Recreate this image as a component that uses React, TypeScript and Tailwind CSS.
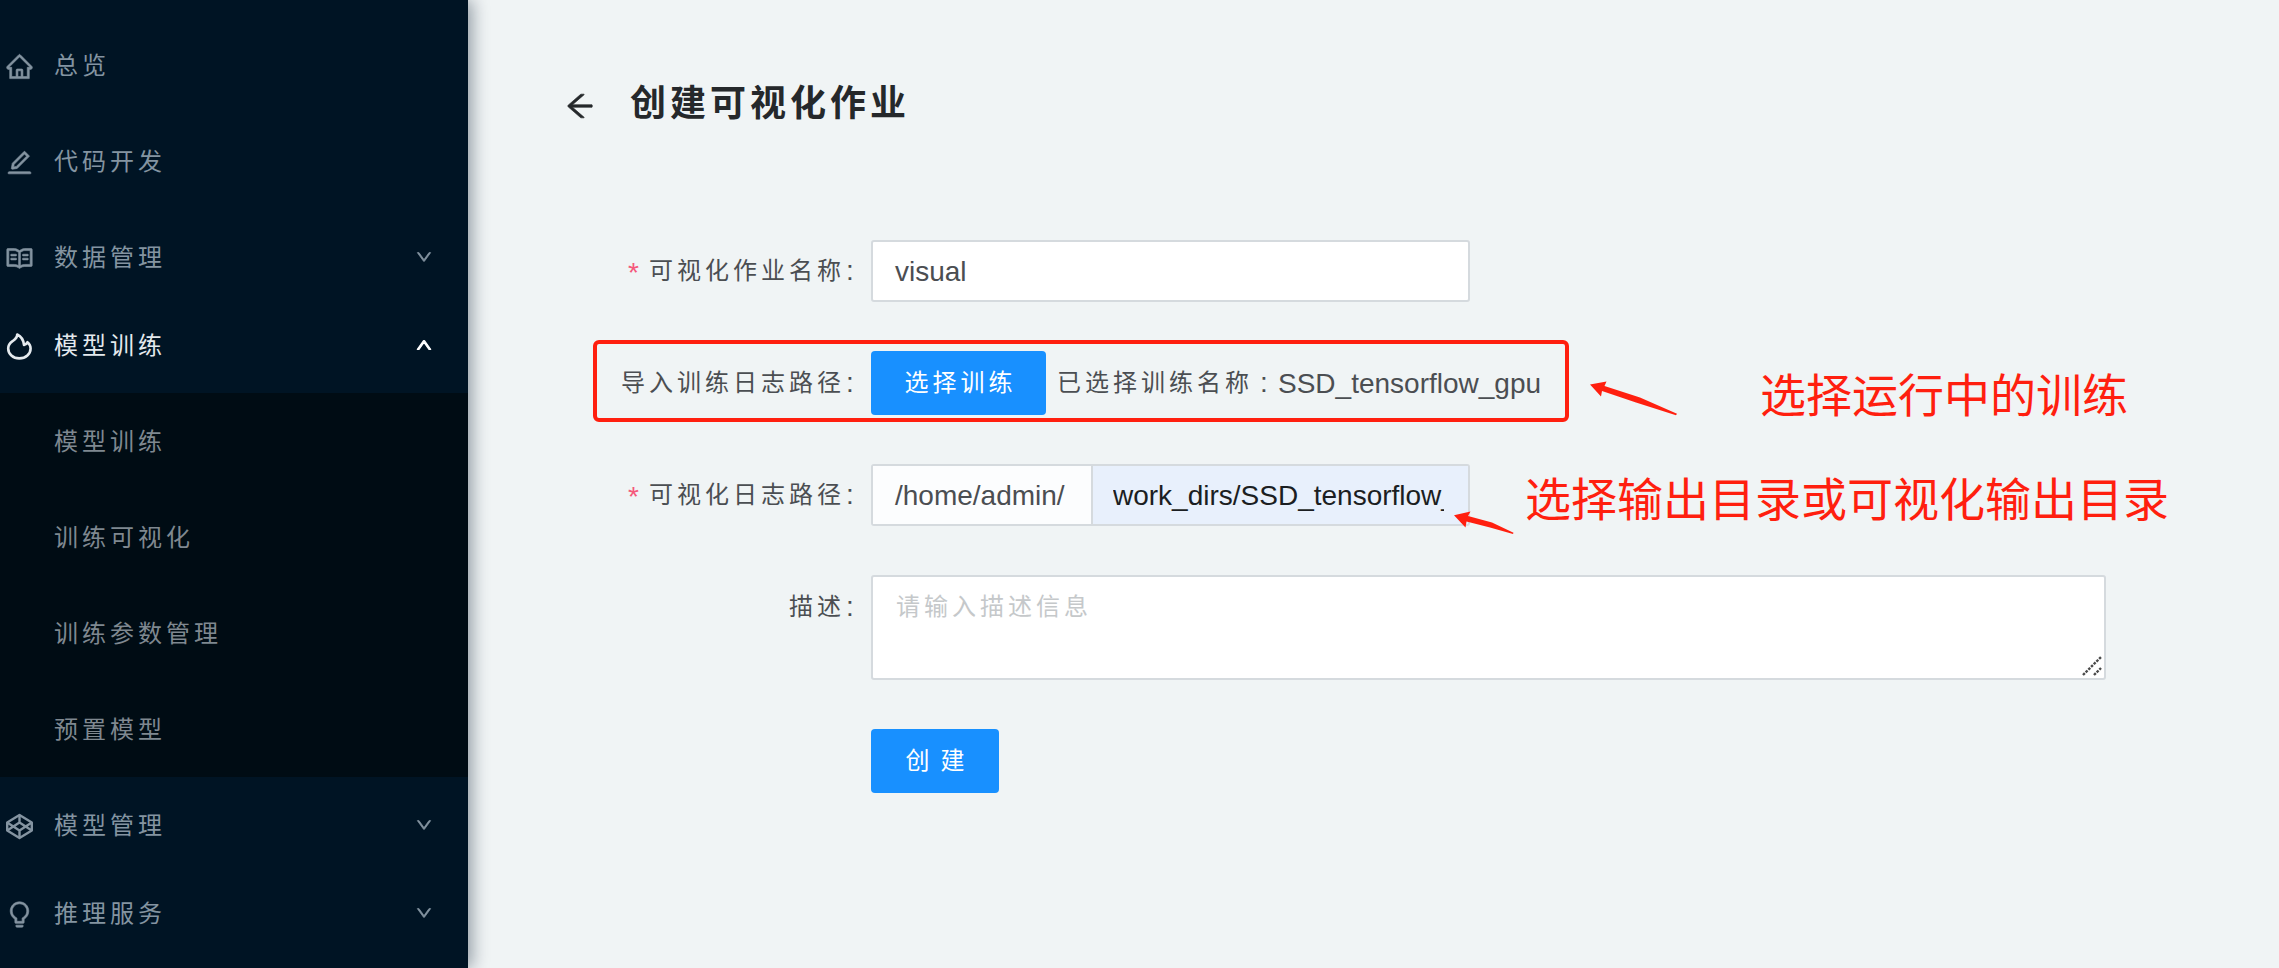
import React from 'react';
import {
  AiOutlineHome,
  AiOutlineEdit,
  AiOutlineRead,
  AiOutlineBulb,
  AiOutlineArrowLeft,
  AiOutlineDown,
  AiOutlineUp,
} from 'react-icons/ai';

const cjk = 'text-[24px] tracking-[4px] leading-8 whitespace-nowrap';

function FlameIcon() {
  return (
    <svg width="29" height="29" viewBox="0 0 29 29" fill="none" stroke="currentColor" strokeWidth="2.6" strokeLinejoin="round">
      <path d="M12.2 2.5C12.4 6 10 7.4 7.2 9.4C4.6 11.3 3.2 13.6 3.2 16.5C3.2 22 8 26.4 14.3 26.4C20.8 26.4 25.6 22 25.6 16.6C25.6 14 24.6 12 22.4 10.2C21.6 12 20.6 12.6 19 13C18.6 8.6 16.6 4.6 12.2 2.5Z" />
    </svg>
  );
}

function ModelIcon() {
  return (
    <svg width="29" height="29" viewBox="0 0 29 29" fill="none" stroke="currentColor" strokeWidth="2.4" strokeLinejoin="round">
      <path d="M14.5 3L26.8 10.6V18.4L14.5 26L2.2 18.4V10.6Z" />
      <path d="M14.5 3V10.6M14.5 18.4V26M2.2 10.6L14.5 18.4L26.8 10.6M2.2 18.4L14.5 10.6L26.8 18.4" />
    </svg>
  );
}

type RowProps = {
  icon: React.ReactNode;
  label: string;
  className: string;
  arrow?: 'up' | 'down';
};

function MenuRow({ icon, label, className, arrow }: RowProps) {
  return (
    <div className={`flex items-center pl-[5px] pr-[35px] shrink-0 ${className}`}>
      <span className="w-[49px] text-[29px] pt-[2px] [&_svg]:overflow-visible">{icon}</span>
      <span className={`flex-1 pt-px ${cjk}`}>{label}</span>
      {arrow === 'down' && <AiOutlineDown className="text-[18px]" stroke="currentColor" strokeWidth="40" />}
      {arrow === 'up' && <AiOutlineUp className="text-[18px] text-white" stroke="currentColor" strokeWidth="70" />}
    </div>
  );
}

function SubRow({ label }: { label: string }) {
  return (
    <div className={`h-24 flex items-center pl-[54px] pt-px text-[#7f8890] ${cjk}`}>{label}</div>
  );
}

function Label({ text, required }: { text: string; required?: boolean }) {
  return (
    <div className={`w-[293px] h-16 flex items-center justify-end text-[#4b4e52] ${cjk}`}>
      {required && <span className="text-[#f5587b] text-[28px] tracking-normal mr-[10px] pt-1">*</span>}
      {text}
      <span className="w-[26px] pl-px text-[28px] tracking-normal">:</span>
    </div>
  );
}

export default function App() {
  return (
    <div className="relative flex w-[2279px] h-[968px] overflow-hidden bg-[#f0f4f5] font-['Liberation_Sans','Noto_Sans_CJK_SC',sans-serif]">
      <aside className="relative z-10 w-[468px] shrink-0 h-full bg-[#001424] text-[#8494a1] pt-[17px] flex flex-col shadow-[4px_0_16px_rgba(0,21,41,0.4)]">
        <MenuRow icon={<AiOutlineHome stroke="currentColor" strokeWidth="22" />} label="总览" className="h-24" />
        <MenuRow icon={<AiOutlineEdit stroke="currentColor" strokeWidth="22" />} label="代码开发" className="h-24" />
        <MenuRow icon={<AiOutlineRead stroke="currentColor" strokeWidth="22" />} label="数据管理" className="h-[88px] pt-2" arrow="down" />
        <MenuRow icon={<FlameIcon />} label="模型训练" className="h-24 text-[#e4eaee]" arrow="up" />
        <div className="bg-[#000c14]">
          <SubRow label="模型训练" />
          <SubRow label="训练可视化" />
          <SubRow label="训练参数管理" />
          <SubRow label="预置模型" />
        </div>
        <MenuRow icon={<ModelIcon />} label="模型管理" className="h-24" arrow="down" />
        <MenuRow icon={<AiOutlineBulb stroke="currentColor" strokeWidth="22" />} label="推理服务" className="h-20" arrow="down" />
      </aside>

      <main className="flex-1 pl-[95px] pt-[77px]">
        <div className="flex items-center h-[54px] text-[#25282b]">
          <AiOutlineArrowLeft className="text-[34px] mt-1 mr-[33px]" stroke="currentColor" strokeWidth="20" />
          <h1 className="text-[36px] tracking-[4px] leading-[54px] font-bold">创建可视化作业</h1>
        </div>

        <form className="mt-[108px] ml-[15px] flex flex-col text-[28px] text-[#4b4e52]">
          <div className="flex h-16">
            <Label text="可视化作业名称" required />
            <div className="mt-px w-[599px] h-[62px] rounded-[3px] border-2 border-[#d5dade] bg-white px-[22px] pt-[2px] flex items-center">visual</div>
          </div>

          <div className="flex h-16 mt-12 items-center">
            <Label text="导入训练日志路径" />
            <div className={`w-[175px] h-16 rounded-[4px] bg-[#1890ff] text-white flex items-center justify-center pl-1 ${cjk}`}>选择训练</div>
            <div className="ml-[11px] flex items-center">
              <span className={cjk}>已选择训练名称</span>
              <span className="w-[25px] pl-[7px]">:</span>
              <span className="pt-px">SSD_tensorflow_gpu</span>
            </div>
          </div>

          <div className="flex h-16 mt-12">
            <Label text="可视化日志路径" required />
            <div className="mt-px flex w-[599px] h-[62px] rounded-[3px] border-2 border-[#d5dade]">
              <div className="w-[218px] shrink-0 bg-[#fcfdfe] pl-[22px] pt-px flex items-center">/home/admin/</div>
              <div className="flex-1 border-l-2 border-[#d5dade] bg-[#e8f0fc] text-[#1b1e22] pl-[20px] pt-px flex items-center">
                <span className="w-[331px] overflow-hidden whitespace-nowrap">work_dirs/SSD_tensorflow_</span>
              </div>
            </div>
          </div>

          <div className="flex mt-12">
            <Label text="描述" />
            <div className="relative w-[1235px] h-[105px] rounded-[3px] border-2 border-[#d5dade] bg-white px-[23px] pt-[14px]">
              <span className={`block text-[#c5c8ca] ${cjk}`}>请输入描述信息</span>
              <svg className="absolute right-[2px] bottom-[2px]" width="20" height="20" viewBox="0 0 20 20" stroke="#4a4a4a" strokeWidth="2.4">
                <path d="M1 19L19 1M12 19L19 12" strokeDasharray="2.6 1.2" />
              </svg>
            </div>
          </div>

          <div className={`mt-[49px] ml-[293px] w-32 h-16 rounded-[4px] bg-[#1890ff] text-white flex items-center justify-center gap-[7px] pl-1 ${cjk}`}>
            <span>创</span>
            <span>建</span>
          </div>
        </form>
      </main>

      <div className="absolute z-20 left-[593px] top-[340px] w-[976px] h-[82px] rounded-[6px] border-4 border-[#ff1f0f]" />
      <svg className="absolute z-20 left-[1440px] top-[370px]" width="250" height="170" viewBox="1440 370 250 170" fill="#ff1f0f">
        <path d="M1590 384.5L1606.5 381.5L1604.5 386L1640 397.5L1677 413.8L1676 415.2L1636 402.5L1602 391L1601 396.5Z" />
        <path d="M1454 515.3L1470.5 511.5L1468 516L1492 522.5L1513.5 532.7L1513 534L1490 527.5L1466.5 521.5L1465.5 527.5Z" />
      </svg>
      <div className="absolute z-20 left-[1760px] top-[367px] text-[46px] leading-[58px] text-[#ff1f0f] whitespace-nowrap">选择运行中的训练</div>
      <div className="absolute z-20 left-[1525px] top-[471px] text-[46px] leading-[58px] text-[#ff1f0f] whitespace-nowrap">选择输出目录或可视化输出目录</div>
    </div>
  );
}
